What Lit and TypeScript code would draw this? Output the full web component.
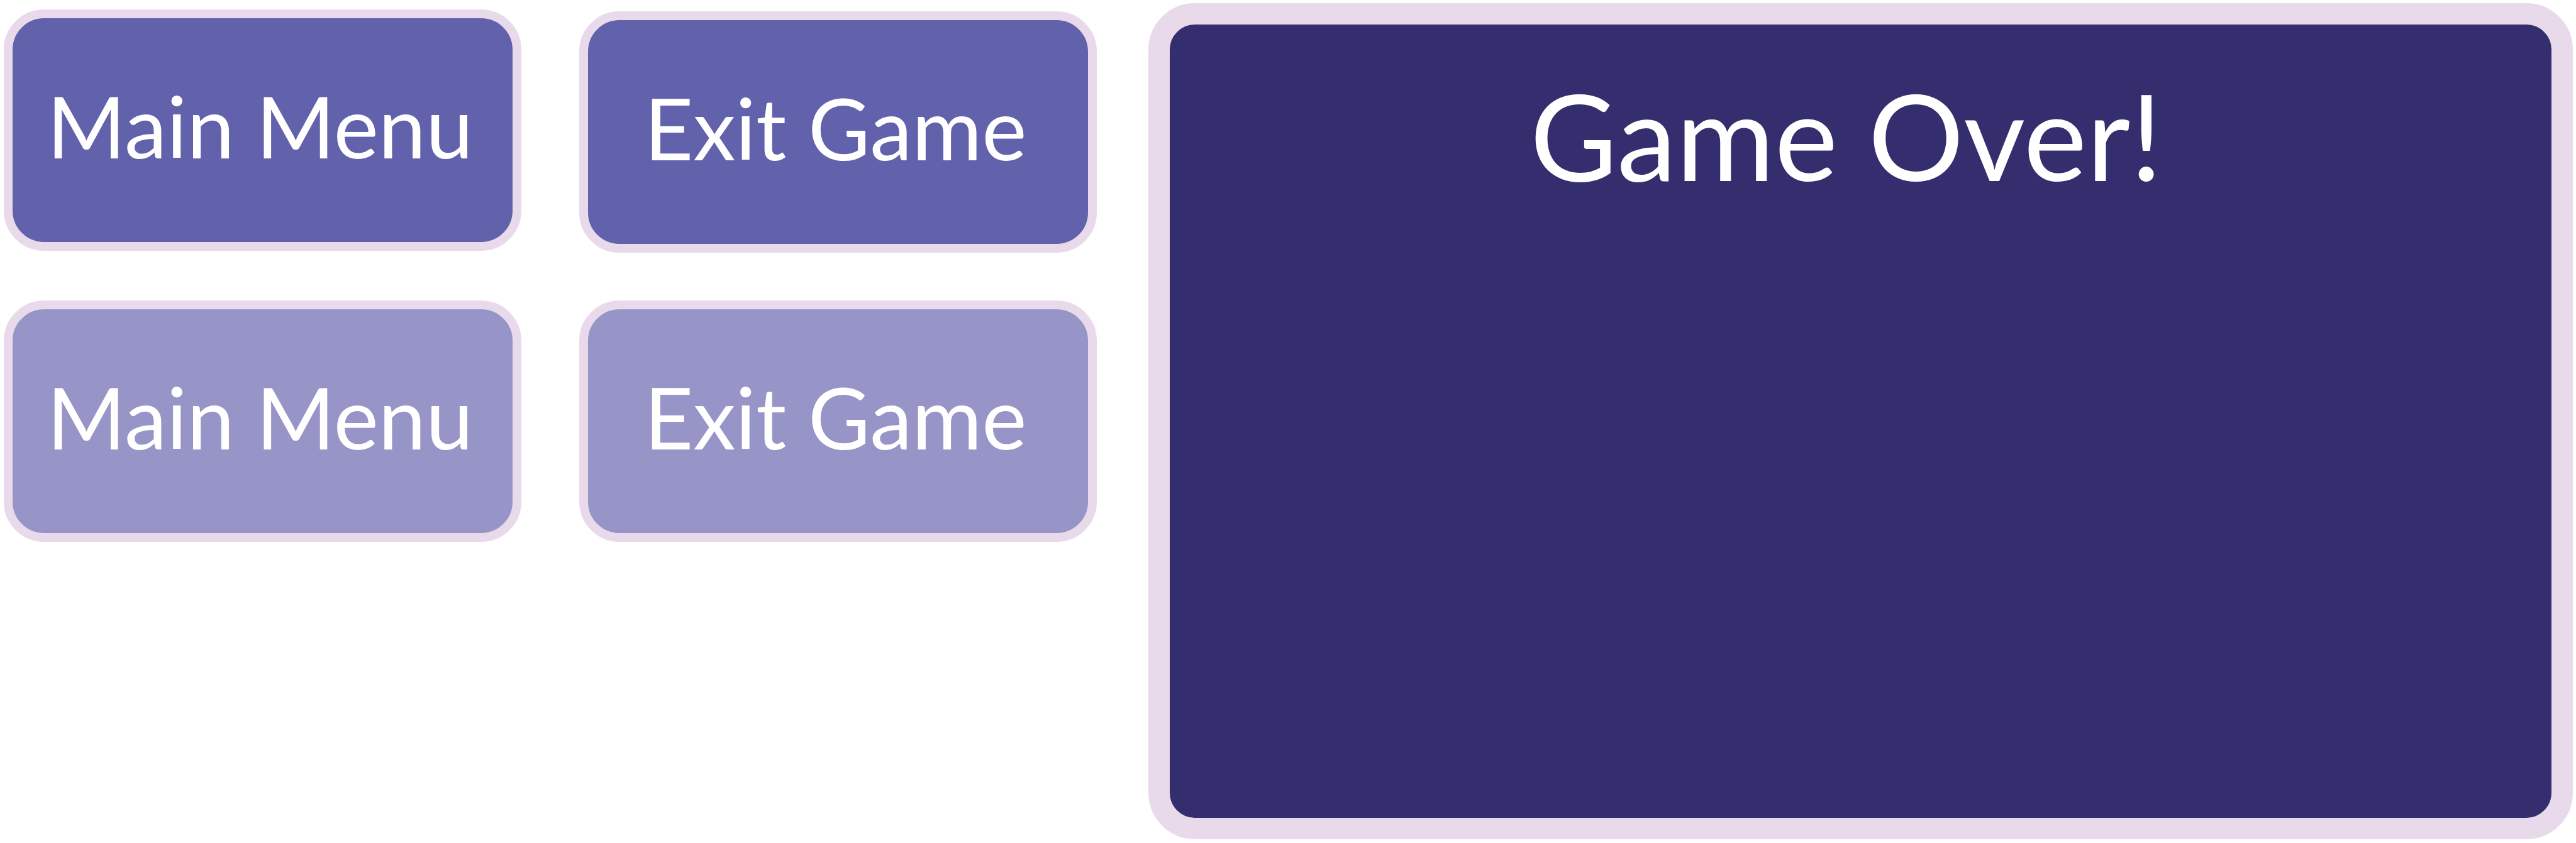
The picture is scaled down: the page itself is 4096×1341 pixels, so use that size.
import { LitElement, html, css } from "lit";
import { customElement, property } from "lit/decorators.js";

@customElement("game-button")
class GameButton extends LitElement {
  @property() label = "";
  @property() tone = "solid";

  static styles = css`
    :host {
      display: block;
    }
    .button {
      display: block;
      box-sizing: border-box;
      width: 100%;
      margin: 0;
      padding: 0 8px 14px 0;
      border: 14px solid #e8daea;
      border-radius: 64px;
      color: #ffffff;
      font-family: Lato, "Open Sans", sans-serif;
      font-size: 135px;
      line-height: 342px;
      text-align: center;
      white-space: nowrap;
      cursor: pointer;
    }
    .solid {
      background: #6261ab;
    }
    .pale {
      background: #9794c7;
    }
  `;

  render() {
    return html`<button type="button" class="button ${this.tone}">${this.label}</button>`;
  }
}

@customElement("app-root")
class AppRoot extends LitElement {
  static styles = css`
    :host {
      display: block;
      background: #ffffff;
      font-family: Lato, "Open Sans", sans-serif;
    }
    .page {
      box-sizing: border-box;
      display: grid;
      grid-template-columns: 1738fr 2265fr;
      column-gap: 82px;
      min-height: 100vh;
      padding: 5px 5px 6px 6px;
    }
    .menu {
      display: grid;
      grid-template-columns: 1fr 1fr;
      column-gap: 92px;
      align-content: start;
      padding-top: 10px;
    }
    .column {
      display: flex;
      flex-direction: column;
      gap: 79px;
    }
    .lowered {
      gap: 76px;
      padding-top: 3px;
    }
    .panel {
      box-sizing: border-box;
      padding: 55px 46px 0 0;
      border: 34px solid #e8daea;
      border-radius: 74px;
      background: #342e6f;
    }
    .title {
      margin: 0;
      color: #ffffff;
      font-size: 190px;
      font-weight: 400;
      line-height: 240px;
      text-align: center;
    }
  `;

  render() {
    return html`
      <main class="page">
        <nav class="menu">
          <div class="column">
            <game-button label="Main Menu"></game-button>
            <game-button label="Main Menu" tone="pale"></game-button>
          </div>
          <div class="column lowered">
            <game-button label="Exit Game"></game-button>
            <game-button label="Exit Game" tone="pale"></game-button>
          </div>
        </nav>
        <section class="panel">
          <h1 class="title">Game Over!</h1>
        </section>
      </main>
    `;
  }
}
